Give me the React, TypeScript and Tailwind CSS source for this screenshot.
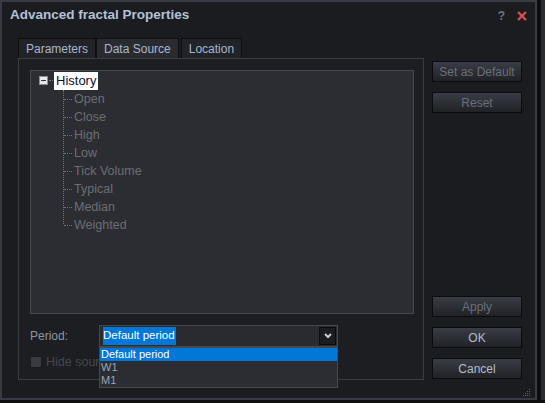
import { useState } from "react"

const treeItems = ["Open", "Close", "High", "Low", "Tick Volume", "Typical", "Median", "Weighted"]

const font = { fontFamily: '"Liberation Sans", Arial, sans-serif' }

const DlgButton = ({ label, disabled }: { label: string; disabled?: boolean }) => (
  <button
    className={`flex h-[21px] w-[90px] items-center justify-center border border-[#0b0b0d] bg-gradient-to-b from-[#3a3d45] to-[#202227] text-[12px] ${
      disabled ? "text-[#6a6e78]" : "text-[#b4bccb]"
    }`}
  >
    {label}
  </button>
)

const App = () => {
  const [tab] = useState("Data Source")
  const tabs = ["Parameters", "Data Source", "Location"]

  return (
    <div className="flex h-[403px] w-[545px] bg-[#0e0e10]" style={font}>
      {/* WINDOW */}
      <div className="flex h-[400px] w-[537px] flex-col border-2 border-[#383b43] bg-[#1b1c20]">
        {/* TITLE */}
        <div className="flex h-[36px] items-start justify-between pl-[8px] pr-[8px] pt-[3px]">
          <span className="text-[13.5px] font-bold text-[#b3c0d6]">Advanced fractal Properties</span>
          <div className="flex items-center gap-[12px] pt-[2px]">
            <span className="text-[12px] font-bold text-[#6e7282]">?</span>
            <svg width="10" height="10" viewBox="0 0 10 10">
              <path d="M1 1 L9 9 M9 1 L1 9" stroke="#d4514c" strokeWidth="2.4" />
            </svg>
          </div>
        </div>

        <div className="flex gap-[8px] pl-[16px]">
          {/* LEFT: TABS + PANEL */}
          <div className="flex w-[406px] flex-col">
            <div className="flex h-[20px] items-end">
              {tabs.map((t) => (
                <div
                  key={t}
                  className={`flex h-[20px] items-center border border-b-0 border-[#0f0f12] px-[7px] text-[12px] text-[#a9b5c9] ${
                    t === tab ? "bg-[#2a2b30]" : "bg-[#222328]"
                  } ${t === "Location" ? "ml-[2px]" : ""}`}
                >
                  {t}
                </div>
              ))}
            </div>

            <div className="relative flex h-[322px] flex-col border border-[#3a3c42] bg-[#1d1e22] pl-[11px] pr-[9px] pt-[11px]">
              {/* TREE */}
              <div className="h-[244px] border border-[#46484e] bg-[#2c2d32] pl-[8px]">
                <div className="flex h-[19px] items-center">
                  <div className="flex h-[9px] w-[9px] items-center justify-center border border-[#8a8d95] bg-[#e9e9ec]">
                    <div className="h-[1px] w-[5px] bg-[#2a2d66]" />
                  </div>
                  <div className="mx-[1px] w-[4px] border-t border-dotted border-[#7a7d84]" />
                  <span className="bg-white px-[2px] text-[13px] leading-[18px] text-[#0e0e30]">History</span>
                </div>
                <div className="ml-[24px] flex flex-col border-l border-dotted border-[#6f7278]" style={{ height: 134 }}>
                  {treeItems.map((item) => (
                    <div key={item} className="flex h-[18px] items-center">
                      <div className="mr-[2px] w-[8px] border-t border-dotted border-[#6f7278]" />
                      <span className="text-[12.5px] text-[#6b6d72]">{item}</span>
                    </div>
                  ))}
                </div>
              </div>

              {/* PERIOD */}
              <div className="mt-[11px] flex h-[22px] items-center">
                <span className="w-[69px] text-[12px] text-[#8e96a5]">Period:</span>
                <div className="relative flex h-[22px] w-[239px] items-center border border-[#46484e] bg-[#2a2b30]">
                  <span className="ml-[3px] bg-[#0078d7] pr-[1px] text-[11.5px] text-white">Default period</span>
                  <div className="absolute right-[1px] top-[1px] flex h-[18px] w-[17px] items-center justify-center border border-[#0b0b0d] bg-[#1b1c20]">
                    <svg width="8" height="6" viewBox="0 0 8 6">
                      <path d="M1 1 L4 4 L7 1" stroke="#c9cdd6" strokeWidth="2" fill="none" />
                    </svg>
                  </div>
                  {/* DROPDOWN */}
                  <div className="absolute left-[-1px] top-[21px] z-10 flex w-[239px] flex-col border border-[#46484e] bg-[#2c2d32] text-[11px] leading-[13px]">
                    <div className="h-[13px] overflow-hidden bg-[#0078d7] pl-[1px] text-white">Default period</div>
                    <div className="h-[13px] overflow-hidden pl-[1px] text-[#9aa3b6]">W1</div>
                    <div className="h-[13px] overflow-hidden pl-[1px] text-[#9aa3b6]">M1</div>
                  </div>
                </div>
              </div>

              {/* HIDE SOURCE (partly under the open list) */}
              <div className="mt-[6px] flex items-center gap-[4px]">
                <div className="h-[12px] w-[12px] border border-[#1a1b1e] bg-[#3a3b40]" />
                <span className="text-[12.5px] text-[#45474d]">Hide source</span>
              </div>
            </div>
          </div>

          {/* RIGHT: BUTTONS */}
          <div className="flex w-[90px] flex-col pt-[23px]">
            <DlgButton label="Set as Default" disabled />
            <div className="mt-[10px]">
              <DlgButton label="Reset" disabled />
            </div>
            <div className="mt-[183px]">
              <DlgButton label="Apply" disabled />
            </div>
            <div className="mt-[10px]">
              <DlgButton label="OK" />
            </div>
            <div className="mt-[10px]">
              <DlgButton label="Cancel" />
            </div>
            <div className="ml-[91px] mt-[10px]">
              <svg width="8" height="8" viewBox="0 0 8 8">
                <g fill="#5a5e68">
                  <rect x="6" y="0" width="1" height="1" />
                  <rect x="4" y="2" width="1" height="1" />
                  <rect x="6" y="2" width="1" height="1" />
                  <rect x="2" y="4" width="1" height="1" />
                  <rect x="4" y="4" width="1" height="1" />
                  <rect x="6" y="4" width="1" height="1" />
                  <rect x="0" y="6" width="1" height="1" />
                  <rect x="2" y="6" width="1" height="1" />
                  <rect x="4" y="6" width="1" height="1" />
                  <rect x="6" y="6" width="1" height="1" />
                </g>
              </svg>
            </div>
          </div>
        </div>
      </div>
      {/* OUTSIDE STRIP */}
      <div className="ml-[4px] h-[400px] w-[4px] bg-[#2b2d33]" />
    </div>
  )
}

export default App
